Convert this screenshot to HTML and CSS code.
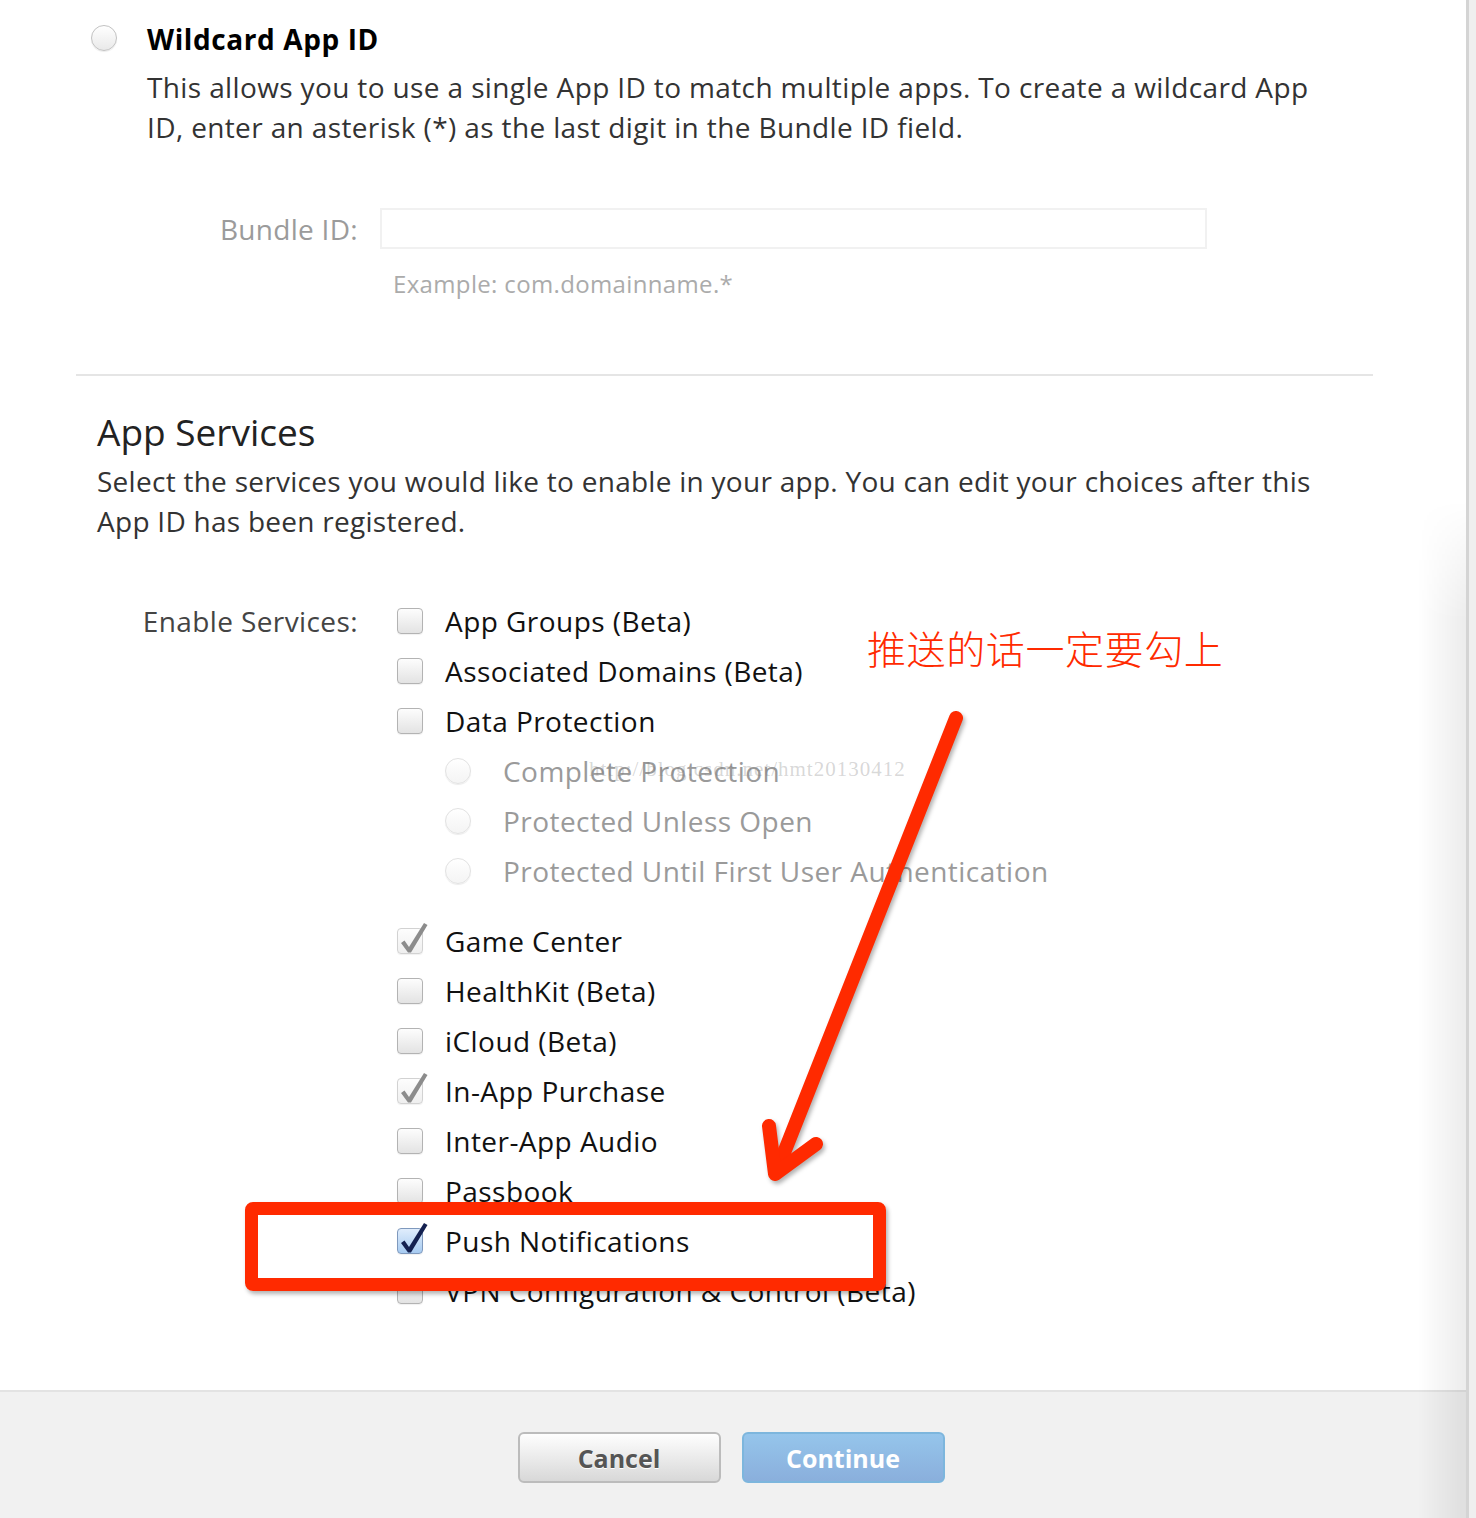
FILE: index.html
```html
<!DOCTYPE html>
<html>
<head>
    <title>Register App ID</title>
    <link rel="stylesheet" href="styles.css">
</head>

<body>
    <div class="panel">
        <!-- Wildcard App ID option -->
        <section class="wildcard">
            <div class="option">
                <span class="radio"></span>
                <div class="option-body">
                    <h2 class="option-title">Wildcard App ID</h2>
                    <p class="option-desc">This allows you to use a single App ID to match multiple apps. To create a wildcard App<br>ID, enter an asterisk (*) as the last digit in the Bundle ID field.</p>
                </div>
            </div>
            <div class="field-row">
                <label class="field-label">Bundle ID:</label>
                <div class="field-input"></div>
            </div>
            <p class="field-hint">Example: com.domainname.*</p>
        </section>

        <hr class="divider">

        <!-- App Services -->
        <section class="services">
            <h2 class="services-title">App Services</h2>
            <p class="services-desc">Select the services you would like to enable in your app. You can edit your choices after this<br>App ID has been registered.</p>

            <div class="service-grid">
                <div class="service-label">Enable Services:</div>
                <ul class="service-list">
                    <li class="service"><span class="checkbox"></span>App Groups (Beta)</li>
                    <li class="service"><span class="checkbox"></span>Associated Domains (Beta)</li>
                    <li class="service"><span class="checkbox"></span>Data Protection</li>
                    <li class="service sub"><span class="radio light"></span>Complete Protection</li>
                    <li class="service sub"><span class="radio light"></span>Protected Unless Open</li>
                    <li class="service sub"><span class="radio light"></span>Protected Until First User Authentication</li>
                    <li class="service after-sub"><span class="checkbox locked"><svg class="check" viewBox="0 0 26 26"><path d="M3 14 L6.5 11.5 L11 18 L26 -6 L29.5 -4 L13 23.5 L10 23.5 Z"/></svg></span>Game Center</li>
                    <li class="service"><span class="checkbox"></span>HealthKit (Beta)</li>
                    <li class="service"><span class="checkbox"></span>iCloud (Beta)</li>
                    <li class="service"><span class="checkbox locked"><svg class="check" viewBox="0 0 26 26"><path d="M3 14 L6.5 11.5 L11 18 L26 -6 L29.5 -4 L13 23.5 L10 23.5 Z"/></svg></span>In-App Purchase</li>
                    <li class="service"><span class="checkbox"></span>Inter-App Audio</li>
                    <li class="service"><span class="checkbox"></span>Passbook</li>
                    <li class="service"><span class="checkbox checked"><svg class="check" viewBox="0 0 26 26"><path d="M3 14 L6.5 11.5 L11 18 L26 -6 L29.5 -4 L13 23.5 L10 23.5 Z"/></svg></span>Push Notifications</li>
                    <li class="service"><span class="checkbox"></span>VPN Configuration &amp; Control (Beta)</li>
                </ul>
            </div>
        </section>

        <footer class="actions">
            <button class="btn btn-cancel">Cancel</button>
            <button class="btn btn-continue">Continue</button>
        </footer>

        <!-- Annotations drawn over the screenshot -->
        <div class="watermark">http://blog.csdn.net/hmt20130412</div>
        <div class="note">推送的话一定要勾上</div>
        <div class="highlight"></div>
        <svg class="arrow" width="1476" height="1518" viewBox="0 0 1476 1518">
            <path d="M956 718 L778 1168" />
            <path d="M769 1126 L775 1174 L816 1144" />
        </svg>
    </div>
</body>
</html>
```

FILE: styles.css
```css
body {
    margin: 0;
    background-color: #efefef;
    font-family: "Open Sans", "Noto Sans", sans-serif;
}

.panel {
    position: relative;
    width: 1466px;
    min-height: 1518px;
    background-color: #fff;
    border-right: 3px solid #d4d4d4;
    display: flex;
    flex-direction: column;
    overflow: hidden;
}

/* soft shade along the right edge, lower part only */
.panel::after {
    content: "";
    position: absolute;
    right: 0;
    top: 500px;
    bottom: 0;
    width: 48px;
    background: linear-gradient(to right, rgba(0, 0, 0, 0), rgba(0, 0, 0, 0.075));
    -webkit-mask-image: linear-gradient(transparent, #000 120px);
    mask-image: linear-gradient(transparent, #000 120px);
    pointer-events: none;
}

/* radios and checkboxes */
.radio {
    flex-shrink: 0;
    width: 24px;
    height: 24px;
    border: 1px solid #c2c2c2;
    border-radius: 50%;
    background: linear-gradient(#ffffff, #e9e9e9);
    box-shadow: 0 1px 1px rgba(0, 0, 0, 0.08);
}

.radio.light {
    border-color: #e2e2e2;
    background: linear-gradient(#ffffff, #f4f4f4);
}

.checkbox {
    position: relative;
    flex-shrink: 0;
    width: 24px;
    height: 24px;
    border: 1px solid #b3b3b3;
    border-radius: 4px;
    background: linear-gradient(#fdfdfd, #e3e3e3);
    box-shadow: 0 1px 1px rgba(0, 0, 0, 0.06);
}

.checkbox.locked {
    border-color: #d2d2d2;
    background: linear-gradient(#fdfdfd, #efefef);
}

.checkbox.checked {
    border-color: #7f99bd;
    background: linear-gradient(#e0edfc, #a7cbf1);
}

.check {
    position: absolute;
    left: 0;
    top: 0;
    width: 26px;
    height: 26px;
    overflow: visible;
}

.locked .check path {
    fill: #8c8c8c;
}

.checked .check path {
    fill: #142150;
}

/* wildcard section */
.wildcard {
    padding-top: 19px;
}

.option {
    display: flex;
    gap: 30px;
    padding-left: 91px;
}

.option .radio {
    margin-top: 6px;
}

.option-title {
    margin: 0;
    font-size: 28px;
    line-height: 40px;
    font-weight: bold;
    letter-spacing: 0.6px;
    color: #000;
}

.option-desc {
    margin: 8px 0 0;
    font-size: 28px;
    line-height: 40px;
    letter-spacing: 0.37px;
    color: #333;
}

.field-row {
    display: grid;
    grid-template-columns: 358px 827px;
    column-gap: 22px;
    align-items: center;
    margin-top: 61px;
}

.field-label {
    text-align: right;
    font-size: 28px;
    letter-spacing: 0.3px;
    color: #9b9b9b;
}

.field-input {
    box-sizing: border-box;
    height: 41px;
    border: 2px solid #f1f1f1;
    background-color: #fff;
}

.field-hint {
    margin: 20px 0 0 393px;
    font-size: 24px;
    line-height: 30px;
    letter-spacing: 0.35px;
    color: #ababab;
}

.divider {
    width: 1297px;
    height: 2px;
    margin: 75px 0 0 76px;
    border: 0;
    background-color: #e5e5e5;
}

/* services section */
.services-title {
    margin: 32px 0 0 97px;
    font-size: 37px;
    line-height: 48px;
    font-weight: normal;
    color: #222;
}

.services-desc {
    margin: 5px 0 0 97px;
    font-size: 28px;
    line-height: 40px;
    letter-spacing: 0.27px;
    color: #333;
}

.service-grid {
    display: grid;
    grid-template-columns: 358px auto;
    column-gap: 39px;
    margin-top: 55px;
}

.service-label {
    text-align: right;
    font-size: 28px;
    line-height: 50px;
    letter-spacing: 0.4px;
    color: #444;
}

.service-list {
    list-style: none;
    margin: 0;
    padding: 0;
}

.service {
    display: flex;
    align-items: center;
    gap: 22px;
    height: 50px;
    font-size: 28px;
    letter-spacing: 0.45px;
    color: #111;
}

.service.sub {
    padding-left: 48px;
    gap: 32px;
    color: #9a9a9a;
}

.service.after-sub {
    margin-top: 20px;
}

/* footer buttons */
.actions {
    margin-top: auto;
    height: 86px;
    padding-top: 40px;
    padding-right: 4px;
    border-top: 2px solid #e3e3e3;
    background-color: #f1f1f1;
    display: flex;
    justify-content: center;
    align-items: flex-start;
    gap: 21px;
}

.btn {
    box-sizing: border-box;
    width: 203px;
    height: 51px;
    border-radius: 6px;
    font-family: "Open Sans", "Noto Sans", sans-serif;
    font-size: 25px;
    font-weight: bold;
}

.btn-cancel {
    border: 2px solid #bcbcbc;
    background: linear-gradient(#fefefe, #d8d8d8);
    color: #555;
    text-shadow: 0 1px 0 #fff;
}

.btn-continue {
    border: 2px solid #7db6dd;
    background: linear-gradient(#95c5eb, #8aafdc);
    color: #fff;
}

/* annotations */
.watermark {
    position: absolute;
    left: 589px;
    top: 757px;
    font-family: "Liberation Serif", serif;
    font-size: 21px;
    letter-spacing: 1px;
    color: rgba(120, 120, 120, 0.3);
}

.note {
    position: absolute;
    left: 867px;
    top: 622px;
    font-family: "Noto Sans CJK SC", sans-serif;
    font-size: 39px;
    font-weight: 300;
    line-height: 50px;
    letter-spacing: 0.6px;
    color: #ff2a00;
}

.highlight {
    position: absolute;
    left: 245px;
    top: 1202px;
    width: 615px;
    height: 63px;
    border: 13px solid #ff2a00;
    border-radius: 8px;
    box-shadow: 2px 3px 4px rgba(0, 0, 0, 0.3);
}

.arrow {
    position: absolute;
    left: 0;
    top: 0;
    pointer-events: none;
    filter: drop-shadow(2px 3px 2px rgba(0, 0, 0, 0.3));
}

.arrow path {
    fill: none;
    stroke: #ff2a00;
    stroke-width: 14;
    stroke-linecap: round;
    stroke-linejoin: round;
}
```
